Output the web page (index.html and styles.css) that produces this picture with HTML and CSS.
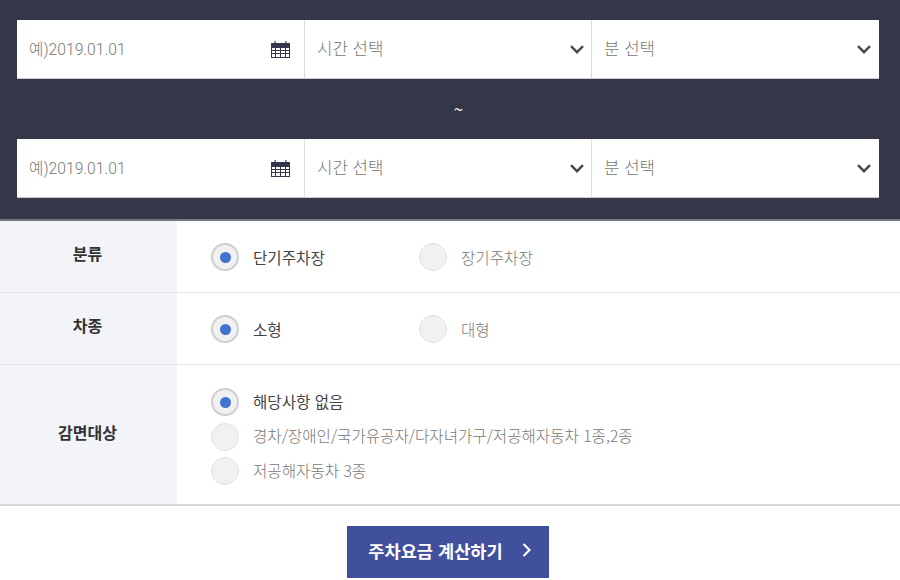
FILE: index.html
```html
<!DOCTYPE html>
<html lang="ko">
<head>
    <meta charset="UTF-8">
    <meta name="viewport" content="width=device-width, initial-scale=1.0">
    <title>주차요금 계산</title>
    <link rel="stylesheet" href="styles.css">
</head>
<body>
    <svg class="defs" width="0" height="0">
        <symbol id="cal" viewBox="0 0 19 17">
            <path fill="#34374a" d="M0 2h3.5V0h1.2v2h9.6V0h1.2v2H19v5H0z"/>
            <path fill="#34374a" fill-rule="evenodd" d="M0 6h19v11H0zM1 7v2h3V7zm4 0v2h4V7zm5 0v2h4V7zm5 0v2h3V7zM1 10v2h3v-2zm4 0v2h4v-2zm5 0v2h4v-2zm5 0v2h3v-2zM1 13v3h3v-3zm4 0v3h4v-3zm5 0v3h4v-3zm5 0v3h3v-3z"/>
        </symbol>
        <symbol id="arrow" viewBox="0 0 14 9">
            <path fill="none" stroke="#4a4a4a" stroke-width="2.4" d="M1 1.2l6 6 6-6"/>
        </symbol>
    </svg>

    <div class="period">
        <div class="period-row">
            <div class="field date">
                <span>예)2019.01.01</span>
                <svg class="cal" width="19" height="17"><use href="#cal"/></svg>
            </div>
            <div class="field time">
                <span>시간 선택</span>
                <svg class="arrow" width="14" height="9"><use href="#arrow"/></svg>
            </div>
            <div class="field min">
                <span>분 선택</span>
                <svg class="arrow" width="14" height="9"><use href="#arrow"/></svg>
            </div>
        </div>
        <div class="tilde">~</div>
        <div class="period-row">
            <div class="field date">
                <span>예)2019.01.01</span>
                <svg class="cal" width="19" height="17"><use href="#cal"/></svg>
            </div>
            <div class="field time">
                <span>시간 선택</span>
                <svg class="arrow" width="14" height="9"><use href="#arrow"/></svg>
            </div>
            <div class="field min">
                <span>분 선택</span>
                <svg class="arrow" width="14" height="9"><use href="#arrow"/></svg>
            </div>
        </div>
    </div>

    <div class="options">
        <div class="opt-row short">
            <div class="opt-label">분류</div>
            <div class="opt-body inline">
                <label class="radio on"><i></i><span>단기주차장</span></label>
                <label class="radio"><i></i><span>장기주차장</span></label>
            </div>
        </div>
        <div class="opt-row short">
            <div class="opt-label">차종</div>
            <div class="opt-body inline">
                <label class="radio on"><i></i><span>소형</span></label>
                <label class="radio"><i></i><span>대형</span></label>
            </div>
        </div>
        <div class="opt-row tall">
            <div class="opt-label">감면대상</div>
            <div class="opt-body stack">
                <label class="radio on"><i></i><span>해당사항 없음</span></label>
                <label class="radio"><i></i><span>경차/장애인/국가유공자/다자녀가구/저공해자동차 1종,2종</span></label>
                <label class="radio"><i></i><span>저공해자동차 3종</span></label>
            </div>
        </div>
    </div>

    <div class="actions">
        <button type="button" class="calc">주차요금 계산하기
            <svg width="10" height="14" viewBox="0 0 10 14"><path fill="none" stroke="#fff" stroke-width="2.1" d="M1.5 1l6 6-6 6"/></svg>
        </button>
    </div>
</body>
</html>
```

FILE: styles.css
```css
html, body {
    margin: 0;
    padding: 0;
}
body {
    width: 900px;
    height: 580px;
    overflow: hidden;
    background: #fff;
    font-family: "Noto Sans CJK KR", "Noto Sans", sans-serif;
    color: #333;
}
.defs {
    position: absolute;
}
.period {
    height: 221px;
    box-sizing: border-box;
    padding: 20px 21px 0 17px;
    background: #343748;
    border-bottom: 2px solid #77787f;
}
.period-row {
    display: flex;
    height: 59px;
    background: #fff;
    border-bottom: 1px solid #c9cad0;
    box-sizing: border-box;
}
.field {
    display: flex;
    align-items: center;
    justify-content: space-between;
    box-sizing: border-box;
    padding: 0 7px 2px 12px;
    border-right: 1px solid #ddd;
    font-size: 16.8px;
    font-weight: 300;
    color: #777;
}
.field.date {
    width: 288px;
    font-family: Roboto, "Noto Sans CJK KR", sans-serif;
    font-size: 15.7px;
    padding-right: 14px;
}
.field.time {
    width: 287px;
}
.field.min {
    flex: 1;
    border-right: 0;
    padding-right: 8px;
}
.cal {
    margin-top: 3px;
}
.arrow {
    margin-top: 3px;
}
.tilde {
    height: 60px;
    line-height: 60px;
    text-align: center;
    padding-left: 21px;
    color: #fff;
    font-size: 17px;
}
.opt-row {
    display: flex;
    box-sizing: border-box;
    border-bottom: 1px solid #e3e4e8;
}
.short {
    height: 72px;
}
.tall {
    height: 141px;
    border-bottom: 2px solid #d6d7da;
}
.opt-label {
    width: 177px;
    display: flex;
    align-items: center;
    justify-content: center;
    padding: 0 2px 8px 0;
    box-sizing: border-box;
    background: #f2f4f8;
    font-size: 16px;
    font-weight: 700;
    color: #333;
}
.tall .opt-label {
    padding-bottom: 6px;
}
.opt-body {
    flex: 1;
    padding-left: 34px;
}
.inline {
    display: flex;
    align-items: center;
    padding-top: 1px;
    box-sizing: border-box;
}
.inline .radio {
    width: 208px;
}
.inline .radio span {
    padding-bottom: 1px;
}
.stack {
    display: flex;
    flex-direction: column;
    gap: 6.5px;
    padding-top: 23px;
}
.radio {
    display: flex;
    align-items: center;
    height: 28px;
    font-size: 15.6px;
    font-weight: 300;
    color: #777;
}
.radio span {
    padding-bottom: 3px;
}
.radio.on {
    font-weight: 400;
    color: #444;
}
.radio i {
    width: 28px;
    height: 28px;
    box-sizing: border-box;
    border-radius: 50%;
    background: #f1f1f2;
    border: 1px solid #e2e2e4;
    margin-right: 14px;
    flex: none;
    display: flex;
    align-items: center;
    justify-content: center;
}
.radio.on i {
    border: 2px solid #cfcfd3;
}
.radio.on i::after {
    content: "";
    width: 11px;
    height: 11px;
    border-radius: 50%;
    background: #4274cf;
}
.actions {
    display: flex;
    justify-content: center;
    padding-top: 20px;
}
.calc {
    display: flex;
    align-items: center;
    justify-content: center;
    gap: 19px;
    width: 202px;
    height: 52px;
    margin-right: 4px;
    border: 0;
    padding: 0 0 4px 4px;
    background: #41509d;
    color: #fff;
    font-family: inherit;
    font-size: 17.6px;
    font-weight: 700;
    cursor: pointer;
}
```
